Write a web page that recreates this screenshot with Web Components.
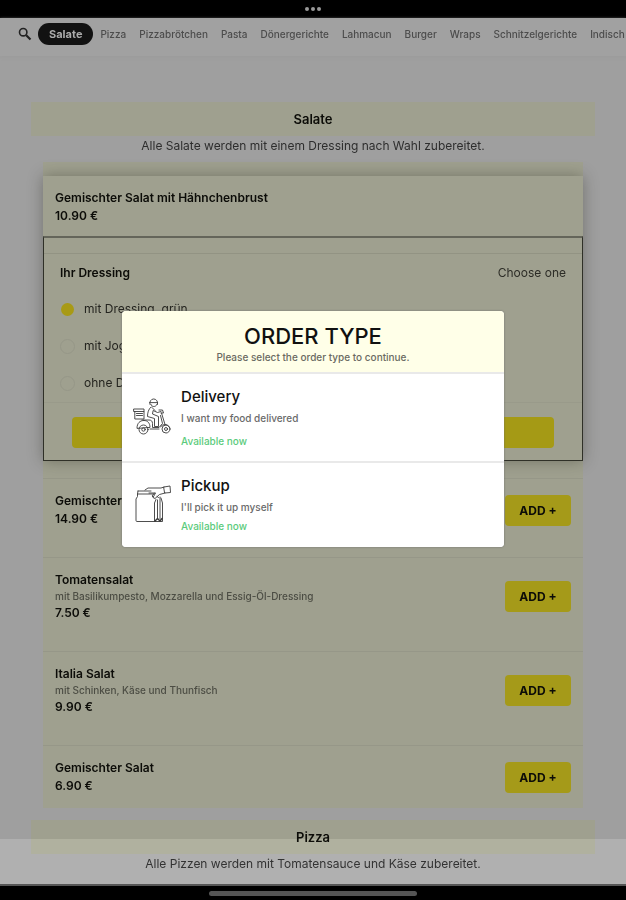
<!DOCTYPE html>
<html lang="de">
<head>
<meta charset="utf-8">
<meta name="viewport" content="width=device-width, initial-scale=1">
<title>Speisekarte</title>
<style>
html{height:100%}
body{margin:0;min-height:100%;font-family:Inter,"Liberation Sans",sans-serif;background:#9f9f9f;color:#0c0c08}
</style>
</head>
<body>
<order-page></order-page>
<script>
const define = (name, html, setup) => {
  const tpl = document.createElement('template');
  tpl.innerHTML = html;
  customElements.define(name, class extends HTMLElement {
    constructor() {
      super();
      this.attachShadow({mode: 'open'}).append(tpl.content.cloneNode(true));
    }
    connectedCallback() { if (setup) setup(this, this.shadowRoot); }
  });
};

define('status-bar', `<style>
:host{display:flex;height:18px;background:#000;justify-content:center;align-items:center;gap:2px}
i{width:4px;height:4px;border-radius:50%;background:#999}
</style><i></i><i></i><i></i>`);

define('home-bar', `<style>
:host{display:flex;height:16px;background:#000;justify-content:center;align-items:center;border-top:2px solid #555;box-sizing:border-box}
i{width:208px;height:5px;border-radius:3px;background:#555}
</style><i></i>`);

define('category-nav', `<style>
:host{display:block;background:#a1a1a1;box-shadow:0 1px 3px #9b9b9b;overflow:hidden}
nav{display:flex;align-items:center;gap:13px;height:32px;padding:0 0 6px 18px;white-space:nowrap}
button{border:0;background:none;padding:0;display:flex;margin-right:-7px;color:#222}
a{font-size:10px;font-weight:500;line-height:22px;color:#4c4c4c;text-decoration:none;flex:none}
a.on{background:#121212;color:#aaa;font-size:11px;font-weight:700;border-radius:11px;padding:0 11px;margin-right:-6px}
</style><nav>
<button aria-label="Suche"><svg width="14" height="14" viewBox="0 0 14 14" fill="none" stroke="currentColor"><circle cx="5.2" cy="5.2" r="3.7" stroke-width="1.6"/><path d="M8.2 8.2l4.3 4.3" stroke-width="2.2"/></svg></button>
<a href="#s" class="on">Salate</a><a href="#p">Pizza</a><a href="#pb">Pizzabrötchen</a><a href="#pa">Pasta</a><a href="#d">Dönergerichte</a><a href="#l">Lahmacun</a><a href="#b">Burger</a><a href="#w">Wraps</a><a href="#sg">Schnitzelgerichte</a><a href="#i">Indisch</a></nav>`);

define('section-title', `<style>
:host{display:block;text-align:center}
h2{margin:0;background:#9fa08f;font-size:13px;line-height:34px;font-weight:600}
p{margin:0;font-size:12px;line-height:20px;color:#2e2e2e}
</style><h2><slot></slot></h2><p><slot name="note"></slot></p>`);

define('menu-item', `<style>
:host{display:flex;justify-content:space-between;align-items:center;border-top:1px solid #969788;padding:13px 12px 29px;box-sizing:border-box}
h3,p{margin:0}
h3,.price{font-size:12px;line-height:18px;font-weight:600}
.d{font-size:10px;font-weight:500;line-height:15px;color:#4c4d44}
button{flex:none;width:66px;height:31px;border:0;border-radius:4px;background:#a59a19;font:700 12px Inter,sans-serif;color:#0c0c08;padding:0}
:host([plain]) button{display:none}
</style><div><h3><slot></slot></h3><p class="d"><slot name="desc"></slot></p><p class="price"><slot name="price"></slot></p></div><button>ADD +</button>`);

define('choice-row', `<style>
:host{display:block}
label{display:flex;align-items:center;gap:9px;font-size:12px;line-height:20px;color:#24241f}
input{appearance:none;margin:0;width:15px;height:15px;border-radius:50%;border:1px solid #969788;box-sizing:border-box}
input:checked{width:13px;height:13px;margin:1px;border:0;background:#a89a15}
</style><label><input type="radio"><span><slot></slot></span></label>`, (host, root) => {
  root.querySelector('input').checked = host.hasAttribute('checked');
});

define('dressing-options', `<style>
:host{display:block;border:1px solid #2f3027;border-top:2px solid #64655a;padding:15px 0 12px;box-sizing:border-box}
header{display:flex;justify-content:space-between;border-top:1px solid #929383;padding:9px 16px 0;font-size:12px;line-height:20px}
h4{margin:0;font-size:12px;font-weight:600}
header span{color:#2c2c26}
.list{display:grid;gap:17px;padding:16px 16px 9px;border-bottom:1px solid #999a8a}
.cta{display:block;height:31px;width:calc(100% - 56px);margin:14px auto 0;border:0;border-radius:4px;background:#a59a15}
</style><header><h4>Ihr Dressing</h4><span>Choose one</span></header>
<div class="list" role="radiogroup" aria-label="Ihr Dressing"><choice-row checked>mit Dressing, grün</choice-row><choice-row>mit Joghurt</choice-row><choice-row>ohne Dressing</choice-row></div>
<button class="cta" aria-label="In den Warenkorb"></button>`);

define('order-choice', `<style>
:host{display:block;border-top:2px solid #e9e9e9;background:#fff}
button{all:unset;display:grid;grid-template-columns:38px 1fr;column-gap:10px;align-items:center;width:100%;box-sizing:border-box;padding:13px 11px}
strong,span{display:block}
strong{font-size:15px;line-height:20px;font-weight:500;color:#111}
.s{font-size:10px;font-weight:500;line-height:14px;margin-top:4px;color:#6a6a6a}
.a{font-size:10px;font-weight:500;line-height:14px;margin-top:var(--gap,9px);color:#5bcb7c}
::slotted(svg){display:block;width:38px;height:38px}
</style><button><slot name="icon"></slot><div><strong><slot></slot></strong><span class="s"><slot name="sub"></slot></span><span class="a">Available now</span></div></button>`);

define('order-dialog', `<style>
:host{display:block;width:61%;border-radius:4px;overflow:hidden;background:#fff;box-shadow:0 0 2px #666;color:#111}
header{background:#ffffe8;text-align:center;padding:12px 0 6px}
h1{margin:0;font-size:22px;line-height:26px;font-weight:500}
p{margin:0;font-size:10px;font-weight:500;line-height:17px;color:#6a6a62}
.up{--gap:5px;padding-bottom:1px}
</style><header><h1>ORDER TYPE</h1><p>Please select the order type to continue.</p></header>
<order-choice>Delivery<span slot="sub">I want my food delivered</span>
<svg slot="icon" viewBox="0 0 38 38" fill="none" stroke="#3a3a3a" stroke-width="0.9" stroke-linejoin="round" stroke-linecap="round">
<path d="M17 6.5a4 4 0 1 1 7.4 0M16.6 4.6h8M18 6.5c.5 2.8 4.8 2.8 6 0"/>
<path d="M1 11h10v2.5H1zM1.8 13.5V21H11v-7.5M3.5 15.5h6M3.5 17.5h6"/>
<path d="M18 9c-2.600 2-3.500 6-3.500 9.500l7 2v8h4v-10l-6-2.500.6-3.500 4.400 2 3.500-1M19 9.500l3 3"/>
<path d="M26 12h3.500l1 3h-2.500M28.500 15l3.500 11.500M9 22h7c2 0 3.500 1 3.500 3.500v4h6.500l3.500-4-2-8"/>
<path d="M4 30c0-5 3-7.500 7-7.500 3.500 0 6 2.500 6 6.500zM17 31h9"/>
<circle cx="10.500" cy="31.500" r="4.500"/><circle cx="10.500" cy="31.500" r="1.700"/>
<path d="M27.500 29c1.500-3 6.500-4 9 .500"/><circle cx="33" cy="31" r="4"/><circle cx="33" cy="31" r="1.500"/>
</svg></order-choice>
<order-choice class="up">Pickup<span slot="sub">I'll pick it up myself</span>
<svg slot="icon" viewBox="0 0 38 38" fill="none" stroke="#3a3a3a" stroke-width="0.9" stroke-linejoin="round" stroke-linecap="round">
<path d="M5 6h13M4.500 9h16M5 6l-.5 3v2.500L3 14v21.500c0 .6.400 1 1 1h18"/>
<path d="M12 5l3-2h13l3-1M31 2l6-1 .5 6.500-5.500.500zM32 8l-5.500 1.500-4.500 4-2-1 2.500-4.500H16M20 12l-1-1 2.500-3M24 11.500l1.500 1"/>
<path d="M23 14.500L21.500 18v18.500h8V18L28 13M24.500 15v19M27 12v22"/>
<path d="M22 36l2.500-2.500L27 36l2-2.500" stroke-width="1.400"/>
</svg></order-choice>`);

define('order-page', `<style>
:host{display:flex;flex-direction:column;min-height:100vh;position:relative;overflow:hidden}
main{flex:1;padding:46px 31px 0}
.card{display:block;margin:6px 12px 12px;background:#9fa08f;padding-top:14px}
.open{box-shadow:0 0 14px rgba(40,40,30,.38);background:#9fa08f;margin-bottom:17px}
.open menu-item{border:0;padding-bottom:11px}
menu-item.last{padding-bottom:13px}
.veil{position:absolute;left:0;right:0;bottom:16px;height:45px;background:#191919;mix-blend-mode:color-dodge}
.layer{position:absolute;inset:0;display:flex;justify-content:center;align-items:center}
.layer order-dialog{margin-top:-43px}
</style>
<status-bar></status-bar><category-nav></category-nav>
<main>
<section-title>Salate<span slot="note">Alle Salate werden mit einem Dressing nach Wahl zubereitet.</span></section-title>
<div class="card">
<div class="open"><menu-item plain>Gemischter Salat mit Hähnchenbrust<span slot="price">10.90 €</span></menu-item><dressing-options></dressing-options></div>
<menu-item>Gemischter Salat<span slot="price">14.90 €</span></menu-item>
<menu-item>Tomatensalat<span slot="desc">mit Basilikumpesto, Mozzarella und Essig-Öl-Dressing</span><span slot="price">7.50 €</span></menu-item>
<menu-item>Italia Salat<span slot="desc">mit Schinken, Käse und Thunfisch</span><span slot="price">9.90 €</span></menu-item>
<menu-item class="last">Gemischter Salat<span slot="price">6.90 €</span></menu-item>
</div>
<section-title>Pizza<span slot="note">Alle Pizzen werden mit Tomatensauce und Käse zubereitet.</span></section-title>
</main>
<home-bar></home-bar><div class="veil"></div>
<div class="layer"><order-dialog></order-dialog></div>`);
</script>
</body>
</html>
